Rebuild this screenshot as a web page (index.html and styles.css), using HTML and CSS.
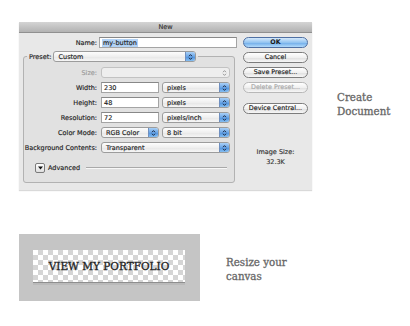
FILE: index.html
```html
<!DOCTYPE html>
<html lang="en">
<head>
<meta charset="UTF-8">
<title>New Document</title>
<link rel="stylesheet" href="styles.css">
</head>
<body>
<div class="page">
  <div class="top">
    <div class="dialog">
      <div class="titlebar">New</div>
      <div class="dialog-body">
        <div class="main">
          <div class="name-row">
            <span class="label">Name:</span>
            <span class="field"><span class="selected">my-button</span></span>
          </div>

          <fieldset class="preset-box">
            <legend>
              <span class="label">Preset:</span>
              <span class="popup preset">Custom<span class="arrows"><svg width="5" height="8" viewBox="0 0 5 8"><path d="M1 3.2 2.5 1.6 4 3.2M1 4.8 2.5 6.4 4 4.8" fill="none" stroke="#1d2b44" stroke-width="1"/></svg></span></span>
            </legend>

            <div class="row">
              <span class="label dim">Size:</span>
              <span class="popup disabled"><span class="arrows plain"><svg width="5" height="8" viewBox="0 0 5 8"><path d="M1 3.2 2.5 1.6 4 3.2M1 4.8 2.5 6.4 4 4.8" fill="none" stroke="#999" stroke-width="1"/></svg></span></span>
            </div>

            <div class="row">
              <span class="label">Width:</span>
              <span class="pair">
                <span class="field">230</span>
                <span class="popup">pixels<span class="arrows"><svg width="5" height="8" viewBox="0 0 5 8"><path d="M1 3.2 2.5 1.6 4 3.2M1 4.8 2.5 6.4 4 4.8" fill="none" stroke="#1d2b44" stroke-width="1"/></svg></span></span>
              </span>
            </div>

            <div class="row">
              <span class="label">Height:</span>
              <span class="pair">
                <span class="field">48</span>
                <span class="popup">pixels<span class="arrows"><svg width="5" height="8" viewBox="0 0 5 8"><path d="M1 3.2 2.5 1.6 4 3.2M1 4.8 2.5 6.4 4 4.8" fill="none" stroke="#1d2b44" stroke-width="1"/></svg></span></span>
              </span>
            </div>

            <div class="row">
              <span class="label">Resolution:</span>
              <span class="pair">
                <span class="field">72</span>
                <span class="popup">pixels/inch<span class="arrows"><svg width="5" height="8" viewBox="0 0 5 8"><path d="M1 3.2 2.5 1.6 4 3.2M1 4.8 2.5 6.4 4 4.8" fill="none" stroke="#1d2b44" stroke-width="1"/></svg></span></span>
              </span>
            </div>

            <div class="row">
              <span class="label">Color Mode:</span>
              <span class="pair">
                <span class="popup short">RGB Color<span class="arrows"><svg width="5" height="8" viewBox="0 0 5 8"><path d="M1 3.2 2.5 1.6 4 3.2M1 4.8 2.5 6.4 4 4.8" fill="none" stroke="#1d2b44" stroke-width="1"/></svg></span></span>
                <span class="popup">8 bit<span class="arrows"><svg width="5" height="8" viewBox="0 0 5 8"><path d="M1 3.2 2.5 1.6 4 3.2M1 4.8 2.5 6.4 4 4.8" fill="none" stroke="#1d2b44" stroke-width="1"/></svg></span></span>
              </span>
            </div>

            <div class="row">
              <span class="label">Background Contents:</span>
              <span class="popup">Transparent<span class="arrows"><svg width="5" height="8" viewBox="0 0 5 8"><path d="M1 3.2 2.5 1.6 4 3.2M1 4.8 2.5 6.4 4 4.8" fill="none" stroke="#1d2b44" stroke-width="1"/></svg></span></span>
            </div>

            <div class="advanced">
              <span class="disclose"><svg width="5" height="4" viewBox="0 0 5 4"><path d="M0 0.5H5L2.5 3.5Z" fill="#111"/></svg></span>
              <span>Advanced</span>
              <span class="rule"></span>
            </div>
          </fieldset>
        </div>

        <div class="side">
          <span class="btn default">OK</span>
          <span class="btn">Cancel</span>
          <span class="btn">Save Preset...</span>
          <span class="btn off">Delete Preset...</span>
          <span class="btn central">Device Central...</span>
          <div class="image-size">Image Size:<br>32.3K</div>
        </div>
      </div>
    </div>

    <div class="note create">Create<br>Document</div>
  </div>

  <div class="bottom">
    <div class="canvas-box">
      <div class="checker">VIEW MY PORTFOLIO</div>
    </div>
    <div class="note resize">Resize your<br>canvas</div>
  </div>
</div>
</body>
</html>
```

FILE: styles.css
```css
body {
  margin: 0;
  background: #fff;
  font-family: "DejaVu Sans", sans-serif;
  color: #222;
}

.page {
  padding: 22px 0 0 19px;
}

.top {
  display: flex;
  align-items: flex-start;
}

/* dialog window */
.dialog {
  width: 293px;
  height: 168px;
  background: #e8e8e8;
  box-shadow: 0 1px 1px rgba(0,0,0,0.15);
  font-size: 6.5px;
  -webkit-text-stroke: 0.15px currentColor;
}

.titlebar {
  height: 11px;
  line-height: 11px;
  text-align: center;
  color: #333;
  background: linear-gradient(#d4d4d4, #b2b2b2);
  border-bottom: 1px solid #909090;
  box-sizing: border-box;
}

.dialog-body {
  display: flex;
  gap: 6px;
  padding: 4px 4px 0 4px;
}

.main {
  width: 214px;
}

.label {
  text-align: right;
  white-space: nowrap;
}
.label.dim {
  color: #9a9a9a;
}

.name-row {
  display: grid;
  grid-template-columns: 74px 138px;
  column-gap: 2px;
  align-items: center;
  height: 11px;
}

.field {
  display: flex;
  align-items: center;
  height: 11px;
  box-sizing: border-box;
  padding-left: 2px;
  background: #fff;
  border: 1px solid #a4a4a4;
  border-top-color: #888;
  width: 58px;
}
.name-row .field {
  width: 138px;
}
.selected {
  background: #b3d3f6;
  padding: 0 1px;
  line-height: 8px;
}

.preset-box {
  margin: 3px 0 0 0;
  padding: 1px 7px 9px 0;
  width: 212px;
  box-sizing: border-box;
  min-width: 0;
  border: 1px solid #b2b2b2;
  border-radius: 3px;
  background: #e1e1e1;
}

.preset-box legend {
  display: flex;
  align-items: center;
  gap: 2px;
  height: 11px;
  padding: 0 2px;
  margin-left: 3px;
}

.row {
  display: grid;
  grid-template-columns: 73px 129px;
  column-gap: 4px;
  align-items: center;
  height: 11px;
  margin-top: 4px;
}

.pair {
  display: flex;
  gap: 3px;
}

/* popup menus */
.popup {
  display: flex;
  align-items: center;
  justify-content: space-between;
  height: 11px;
  box-sizing: border-box;
  padding-left: 4px;
  border: 1px solid #9c9c9c;
  border-radius: 3px;
  background: linear-gradient(#fdfdfd, #efefef 50%, #e6e6e6 51%, #f6f6f6);
  width: 129px;
  overflow: hidden;
}
.pair .popup {
  width: 68px;
}
.pair .popup.short {
  width: 58px;
}
.popup.preset {
  width: 143px;
}
.popup.disabled {
  background: #eeeeee;
  border-color: #c2c2c2;
}

.arrows {
  display: flex;
  align-items: center;
  justify-content: center;
  width: 9px;
  height: 9px;
  margin-left: auto;
  border-left: 1px solid #6f8fbf;
  background: linear-gradient(#a9d0f7, #6aa5e6 50%, #4d8fdc 51%, #86bff2);
}
.arrows.plain {
  background: none;
  border-left: none;
}

.advanced {
  display: flex;
  align-items: center;
  gap: 3px;
  height: 10px;
  margin-top: 9.5px;
  padding-left: 11px;
}
.disclose {
  display: flex;
  align-items: center;
  justify-content: center;
  width: 10px;
  height: 10px;
  box-sizing: border-box;
  border: 1px solid #7a7a7a;
  border-radius: 2px;
  background: linear-gradient(#fff, #dedede);
}
.rule {
  flex: 1;
  margin-left: 3px;
  border-top: 1px solid #a9a9a9;
  border-bottom: 1px solid #f7f7f7;
}

/* button column */
.side {
  width: 65px;
  display: flex;
  flex-direction: column;
  gap: 4px;
}

.btn {
  height: 11px;
  line-height: 9px;
  box-sizing: border-box;
  text-align: center;
  font-size: 6.4px;
  color: #1a1a1a;
  border: 1px solid #7c7c7c;
  border-radius: 6px;
  background: linear-gradient(#ffffff, #f0f0f0 50%, #dedede 51%, #f7f7f7);
}
.btn.default {
  border-color: #4f70a3;
  background: linear-gradient(#d5e9fc, #93c4f1 50%, #6caae8 51%, #b2dafb);
  font-weight: bold;
  -webkit-text-stroke: 0;
}
.btn.off {
  color: #a8a8a8;
  border-color: #b8b8b8;
}
.btn.central {
  margin-top: 6px;
}

.image-size {
  margin-top: 29px;
  text-align: center;
  line-height: 10px;
  color: #333;
}

/* captions */
.note {
  font-family: "DejaVu Serif", serif;
  font-size: 10.3px;
  line-height: 14px;
  color: #676767;
  -webkit-text-stroke: 0.3px currentColor;
}
.create {
  margin: 68px 0 0 25px;
}

.bottom {
  display: flex;
  align-items: flex-start;
  margin-top: 44px;
}

.canvas-box {
  width: 181px;
  height: 67px;
  box-sizing: border-box;
  padding: 16px 0 0 14px;
  background: #c5c5c5;
}

.checker {
  width: 152px;
  height: 32px;
  line-height: 32px;
  text-align: center;
  font-family: "DejaVu Serif", serif;
  font-size: 10.5px;
  color: #232323;
  -webkit-text-stroke: 0.3px currentColor;
  background-color: #fff;
  background-image: conic-gradient(#d5d5d5 25%, #fff 0 50%, #d5d5d5 0 75%, #fff 0);
  background-size: 10px 10px;
  box-shadow: 0 1px 0 #8e8e8e, 0 3px 0 #bababa;
}

.resize {
  margin: 21px 0 0 26px;
}
```
